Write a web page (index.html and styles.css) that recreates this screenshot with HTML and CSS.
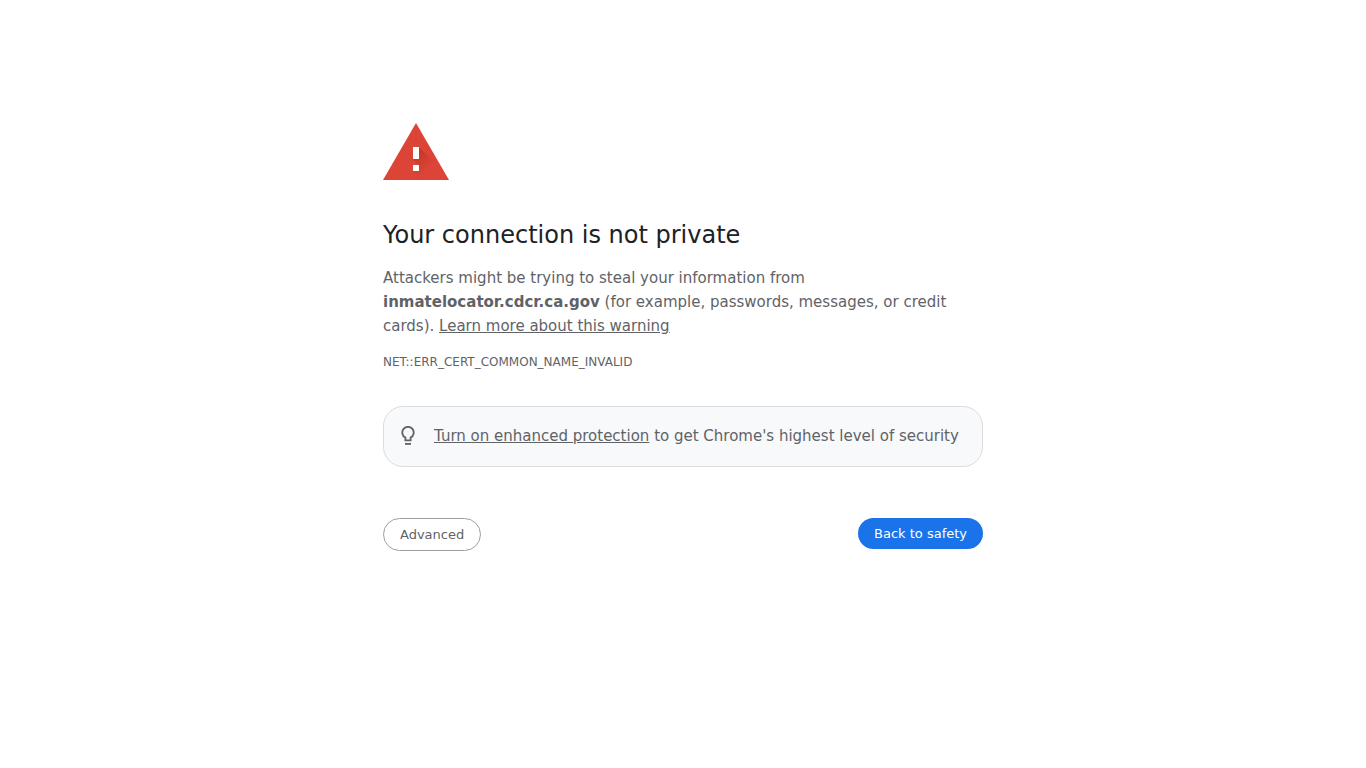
FILE: index.html
```html
<!DOCTYPE html>
<html lang="en">
<head>
  <meta charset="utf-8">
  <meta name="viewport" content="width=device-width, initial-scale=1">
  <title>Privacy error</title>
  <link rel="stylesheet" href="styles.css">
</head>
<body>
  <main class="interstitial-wrapper">
    <svg class="icon" viewBox="0 0 66 57" aria-hidden="true">
      <defs>
        <linearGradient id="shade" x1="34" y1="32" x2="46" y2="44" gradientUnits="userSpaceOnUse">
          <stop offset="0" stop-color="#a52714" stop-opacity=".4"/>
          <stop offset="1" stop-color="#a52714" stop-opacity="0"/>
        </linearGradient>
      </defs>
      <path fill="#db4437" d="M0 57L33 0l33 57z"/>
      <path fill="url(#shade)" d="M36 24l20 20 8 13H39l-9-9 6-6-6-6z"/>
      <path fill="#fff" d="M30 24h6v12h-6zM30 42h6v6h-6z"/>
    </svg>
    <h1>Your connection is not private</h1>
    <p>Attackers might be trying to steal your information from <strong>inmatelocator.cdcr.ca.gov</strong> (for example, passwords, messages, or credit cards). <a href="#">Learn more about this warning</a></p>
    <div class="error-code">NET::ERR_CERT_COMMON_NAME_INVALID</div>
    <div class="enhanced-protection">
      <svg class="bulb" viewBox="0 0 20 20" fill="none" stroke="#5f6368" stroke-width="1.8" aria-hidden="true">
        <path d="M7.4 14.3v-2.7A5.7 5.7 0 1 1 12.6 11.6v2.7z"/>
        <path d="M7 17.9h6"/>
      </svg>
      <div><a href="#">Turn on enhanced protection</a> to get Chrome's highest level of security</div>
    </div>
    <div class="nav-wrapper">
      <button class="secondary-button" type="button">Advanced</button>
      <button class="primary-button" type="button">Back to safety</button>
    </div>
  </main>
</body>
</html>
```
FILE: styles.css
```css
body {
  margin: 0;
  background: #fff;
  color: #5f6368;
  font-family: "DejaVu Sans", sans-serif;
  font-size: 15px;
  line-height: 24px;
}
.interstitial-wrapper {
  max-width: 600px;
  margin: 0 auto;
  padding: 123px 24px 0;
}
.icon {
  display: block;
  width: 66px;
  height: 57px;
  margin-bottom: 40px;
}
h1 {
  margin: 0 0 16px;
  color: #202124;
  font-size: 24px;
  font-weight: 500;
  line-height: 30px;
}
p {
  margin: 0;
}
a {
  color: inherit;
}
.error-code {
  margin-top: 12px;
  font-size: 12px;
}
.enhanced-protection {
  display: flex;
  align-items: center;
  gap: 16px;
  margin-top: 32px;
  padding: 17px 14px 18px;
  border: 1px solid #dadce0;
  border-radius: 20px;
  background: #f8f9fa;
}
.bulb {
  flex: none;
  width: 20px;
  height: 20px;
}
.nav-wrapper {
  display: flex;
  align-items: flex-start;
  justify-content: space-between;
  margin-top: 51px;
}
button {
  padding: 8px 16px;
  border: 0;
  border-radius: 20px;
  font-family: inherit;
  font-size: 13px;
  line-height: 15px;
  cursor: pointer;
}
.primary-button {
  background: #1a73e8;
  color: #fff;
}
.secondary-button {
  border: 1px solid #9aa0a6;
  background: #fff;
  color: #5f6368;
}
```
